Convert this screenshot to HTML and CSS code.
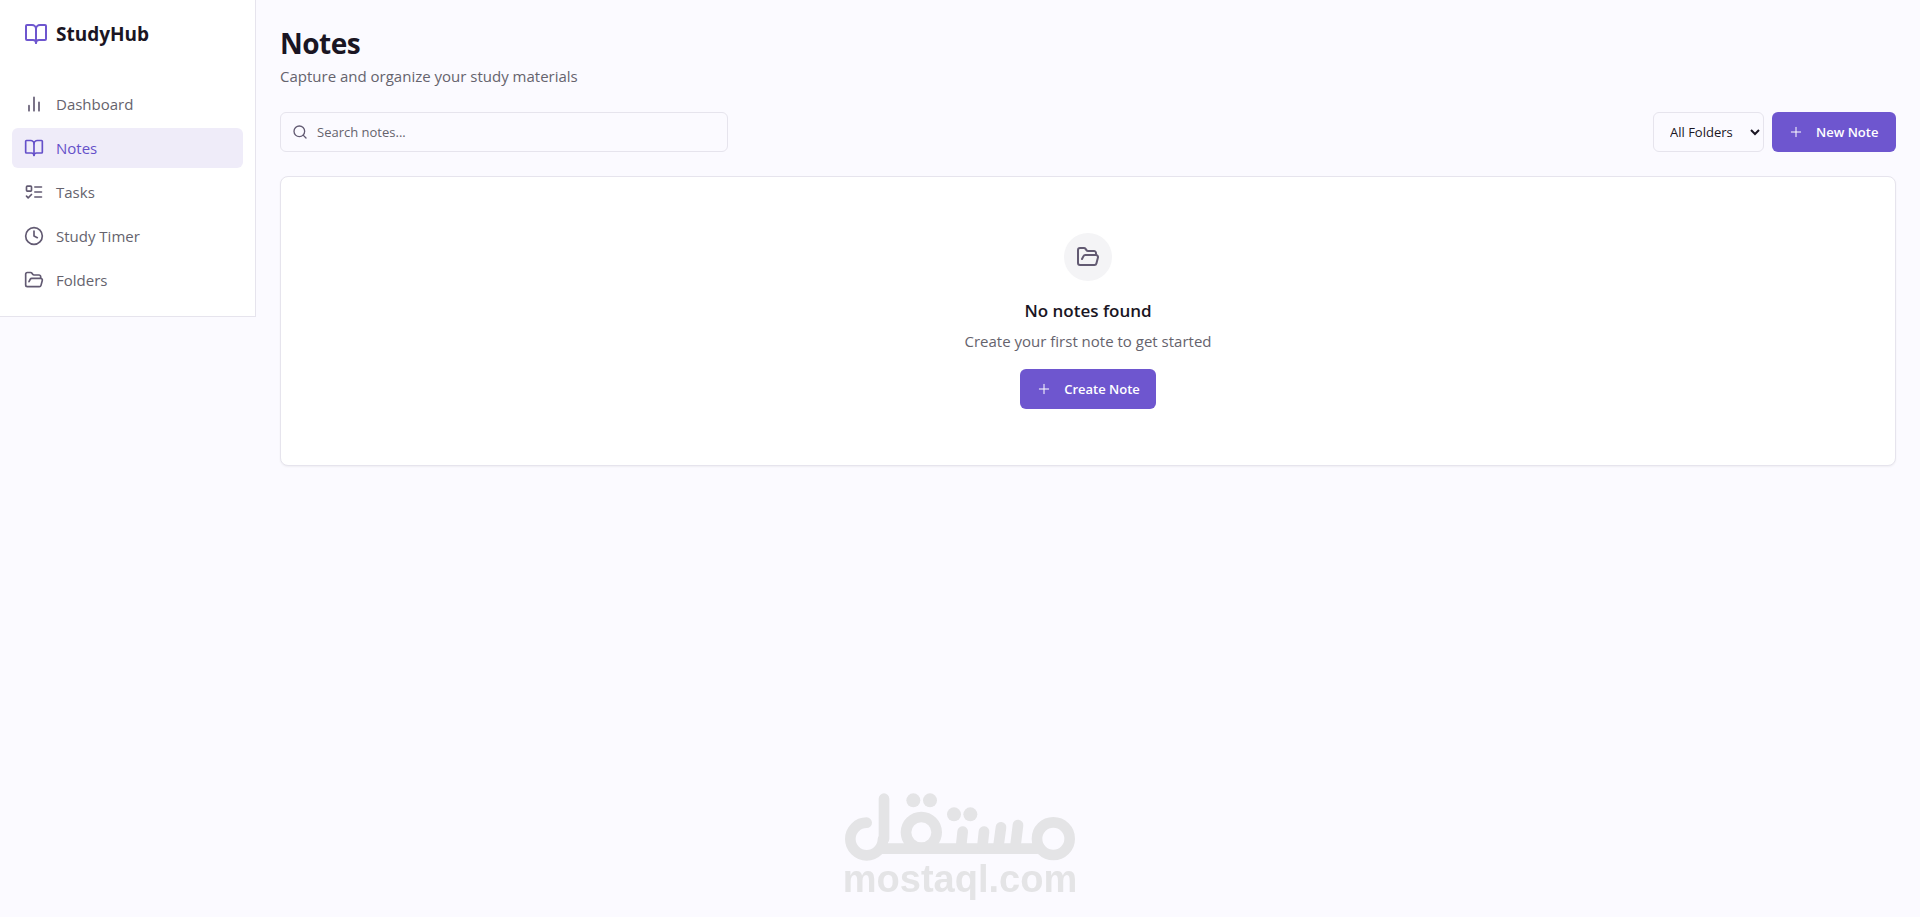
FILE: index.html
```html
<!DOCTYPE html>
<html lang="en">

<head>
  <meta charset="UTF-8">
  <meta name="viewport" content="width=device-width, initial-scale=1.0">
  <title>StudyHub - Notes</title>
  <link rel="stylesheet" href="styles.css">
</head>

<body>
  <!-- shared icons -->
  <svg class="sprite" aria-hidden="true">
    <symbol id="icon-book" viewBox="0 0 24 24">
      <path d="M12 7v14" />
      <path d="M3 18a1 1 0 0 1-1-1V4a1 1 0 0 1 1-1h5a4 4 0 0 1 4 4 4 4 0 0 1 4-4h5a1 1 0 0 1 1 1v13a1 1 0 0 1-1 1h-6a3 3 0 0 0-3 3 3 3 0 0 0-3-3z" />
    </symbol>
    <symbol id="icon-chart" viewBox="0 0 24 24">
      <path d="M18 20V10M12 20V4M6 20v-6" />
    </symbol>
    <symbol id="icon-tasks" viewBox="0 0 24 24">
      <rect x="3" y="5" width="6" height="6" rx="1" />
      <path d="m3 17 2 2 4-4M13 6h8M13 12h8M13 18h8" />
    </symbol>
    <symbol id="icon-clock" viewBox="0 0 24 24">
      <circle cx="12" cy="12" r="10" />
      <path d="M12 6v6l4 2" />
    </symbol>
    <symbol id="icon-folder" viewBox="0 0 24 24">
      <path d="m6 14 1.500-2.900A2 2 0 0 1 9.240 10H20a2 2 0 0 1 1.940 2.500l-1.540 6a2 2 0 0 1-1.950 1.500H4a2 2 0 0 1-2-2V5a2 2 0 0 1 2-2h3.900a2 2 0 0 1 1.690.900l.810 1.200a2 2 0 0 0 1.670.900H18a2 2 0 0 1 2 2v2" />
    </symbol>
    <symbol id="icon-search" viewBox="0 0 24 24">
      <circle cx="11" cy="11" r="8" />
      <path d="m21 21-4.300-4.300" />
    </symbol>
    <symbol id="icon-plus" viewBox="0 0 24 24">
      <path d="M5 12h14M12 5v14" />
    </symbol>
  </svg>

  <div class="layout">
    <aside class="sidebar">
      <a class="brand" href="#">
        <svg class="icon icon-lg"><use href="#icon-book" /></svg>
        <span>StudyHub</span>
      </a>
      <nav class="nav">
        <a class="nav-link" href="#"><svg class="icon"><use href="#icon-chart" /></svg>Dashboard</a>
        <a class="nav-link active" href="#" aria-current="page"><svg class="icon"><use href="#icon-book" /></svg>Notes</a>
        <a class="nav-link" href="#"><svg class="icon"><use href="#icon-tasks" /></svg>Tasks</a>
        <a class="nav-link" href="#"><svg class="icon"><use href="#icon-clock" /></svg>Study Timer</a>
        <a class="nav-link" href="#"><svg class="icon"><use href="#icon-folder" /></svg>Folders</a>
      </nav>
    </aside>

    <main class="content">
      <header class="page-header">
        <h1>Notes</h1>
        <p>Capture and organize your study materials</p>
      </header>

      <div class="toolbar">
        <label class="search">
          <svg class="icon icon-sm"><use href="#icon-search" /></svg>
          <input type="search" placeholder="Search notes..." aria-label="Search notes">
        </label>
        <div class="actions">
          <select class="folder-select" aria-label="Folder">
            <option>All Folders</option>
          </select>
          <button class="btn" type="button"><svg class="icon icon-sm"><use href="#icon-plus" /></svg>New Note</button>
        </div>
      </div>

      <section class="empty">
        <div class="empty-icon"><svg class="icon icon-lg"><use href="#icon-folder" /></svg></div>
        <h2>No notes found</h2>
        <p>Create your first note to get started</p>
        <button class="btn" type="button"><svg class="icon icon-sm"><use href="#icon-plus" /></svg>Create Note</button>
      </section>
    </main>
  </div>

  <div class="watermark">
    <svg viewBox="45 38 690 204" role="img" aria-label="مستقل">
      <path d="M110 127a49 49 0 1 0 49 49M162 55v121M160 205h461" />
      <circle cx="274" cy="156" r="46" />
      <circle cx="670" cy="175" r="49" />
      <path d="M398 154l-5 46M462 154l-5 46M513 141l-8 59M564 134l-8 66" />
      <g class="dots">
        <circle cx="250" cy="60" r="21" />
        <circle cx="300" cy="60" r="21" />
        <circle cx="372" cy="102" r="21" />
        <circle cx="421" cy="102" r="21" />
      </g>
    </svg>
    <span>mostaql.com</span>
  </div>
</body>

</html>
```
FILE: styles.css
```css
* {
  margin: 0;
  padding: 0;
  box-sizing: border-box;
}

body {
  background: #fbfaff;
  color: #1a1523;
  font-family: "Segoe UI", "Open Sans", "Noto Sans", sans-serif;
  font-size: 15px;
  line-height: 24px;
}

a {
  color: inherit;
  text-decoration: none;
}

.sprite {
  position: absolute;
  width: 0;
  height: 0;
}

.icon {
  flex: none;
  width: 20px;
  height: 20px;
  fill: none;
  stroke: currentColor;
  stroke-width: 2;
  stroke-linecap: round;
  stroke-linejoin: round;
}

.icon-sm {
  width: 16px;
  height: 16px;
}

.icon-lg {
  width: 24px;
  height: 24px;
}

.layout {
  display: flex;
  align-items: flex-start;
}

/* sidebar */
.sidebar {
  flex: none;
  width: 256px;
  background: #fff;
  border-right: 1px solid #e6e4ed;
  border-bottom: 1px solid #e6e4ed;
}

.brand {
  display: flex;
  align-items: center;
  gap: 8px;
  padding: 20px 24px;
  font-size: 19px;
  font-weight: 700;
  line-height: 28px;
}

.brand .icon {
  color: #6e56cf;
}

.nav {
  display: flex;
  flex-direction: column;
  gap: 4px;
  padding: 16px 12px;
}

.nav-link {
  display: flex;
  align-items: center;
  gap: 12px;
  height: 40px;
  padding: 0 12px;
  border-radius: 6px;
  color: #65636d;
}

.nav-link .icon {
  color: #625a72;
}

.nav-link.active,
.nav-link.active .icon {
  color: #6550c9;
}

.nav-link.active {
  background: #efecf9;
  font-weight: 500;
}

/* page */
.content {
  flex: 1;
  min-width: 0;
  padding: 24px;
}

.page-header {
  margin-bottom: 24px;
}

.page-header h1 {
  margin-bottom: 2px;
  font-size: 28px;
  line-height: 38px;
  letter-spacing: -0.5px;
}

.page-header p,
.empty p {
  color: #65636d;
}

.toolbar {
  display: flex;
  justify-content: space-between;
  gap: 16px;
  margin-bottom: 24px;
}

.search {
  position: relative;
  flex: 0 1 448px;
}

.search .icon {
  position: absolute;
  top: 12px;
  left: 12px;
  color: #625a72;
}

.search input,
.folder-select {
  height: 40px;
  border: 1px solid #e6e4ed;
  border-radius: 6px;
  background: transparent;
  color: inherit;
  font-family: inherit;
  font-size: 13px;
}

.search input {
  width: 100%;
  padding: 0 12px 0 36px;
  appearance: none;
}

.search input::placeholder {
  color: #65636d;
}

.actions {
  display: flex;
  gap: 8px;
}

.folder-select {
  width: 111px;
  padding: 0 0 0 12px;
}

.btn {
  display: inline-flex;
  align-items: center;
  gap: 12px;
  min-width: 124px;
  height: 40px;
  padding: 0 16px;
  border: 0;
  border-radius: 6px;
  background: #6e56cf;
  color: #fff;
  font-family: inherit;
  font-size: 13px;
  font-weight: 600;
  cursor: pointer;
}

.btn:hover {
  background: #6550b9;
}

.btn .icon {
  stroke-width: 1.5;
}

.empty {
  display: flex;
  flex-direction: column;
  align-items: center;
  padding: 56px 24px;
  border: 1px solid #e6e4ed;
  border-radius: 8px;
  background: #fff;
  box-shadow: 0 1px 2px rgba(0, 0, 0, 0.05);
  text-align: center;
}

.empty-icon {
  display: flex;
  align-items: center;
  justify-content: center;
  width: 48px;
  height: 48px;
  margin-bottom: 16px;
  border-radius: 50%;
  background: #f4f4f6;
  color: #625a72;
}

.empty h2 {
  margin-bottom: 4px;
  font-size: 17px;
  font-weight: 600;
  line-height: 28px;
}

.empty p {
  margin-bottom: 16px;
}

/* watermark over the page */
.watermark {
  position: fixed;
  bottom: 20px;
  left: 50%;
  display: flex;
  flex-direction: column;
  align-items: center;
  width: 230px;
  transform: translateX(-50%);
  color: #e4e4e6;
  font-family: "Liberation Sans", Arial, sans-serif;
  font-size: 38px;
  font-weight: 700;
  line-height: 36px;
  pointer-events: none;
}

.watermark svg {
  width: 230px;
  height: 68px;
  fill: none;
  stroke: currentColor;
  stroke-width: 32;
  stroke-linecap: round;
}

.watermark .dots {
  fill: currentColor;
  stroke: none;
}
```
